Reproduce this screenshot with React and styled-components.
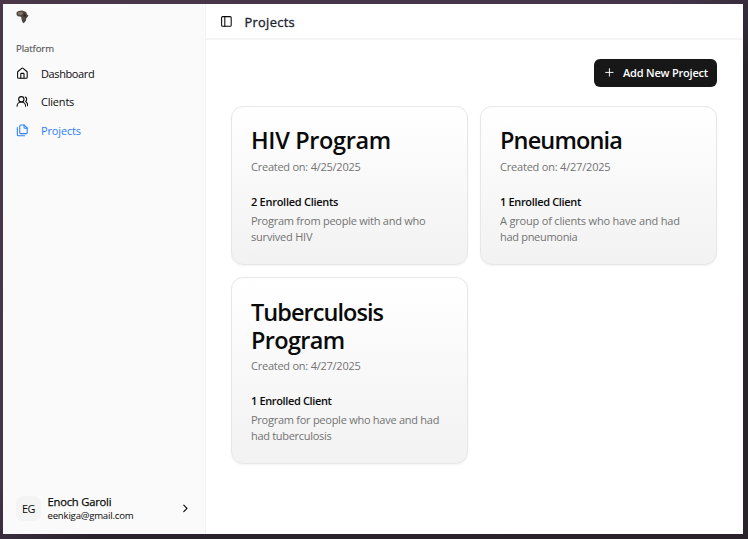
import React from 'react';
import styled, { createGlobalStyle } from 'styled-components';
import { House, UsersRound, PanelLeft, Plus, ChevronRight } from 'lucide-react';

const GlobalStyle = createGlobalStyle`
  * { box-sizing: border-box; }
  body { margin: 0; font-family: 'Open Sans', 'Noto Sans', sans-serif; color: #0a0a0a; }
  h1, h2, p { margin: 0; font-weight: inherit; }
`;

const Desktop = styled.div`
  height: 539px;
  padding: 4px 5px 5px 3px;
  background: linear-gradient(to bottom right, #493748 0%, #44354a 45%, #28232b 56%, #2a222a 100%);
`;

const Window = styled.div`
  display: grid;
  grid-template-columns: 203px 1fr;
  height: 530px;
  background: #fff;
`;

const Sidebar = styled.aside`
  display: flex;
  flex-direction: column;
  background: #fafafa;
  border-right: 1px solid #f1f1f1;
`;

const Logo = styled.svg`
  display: block;
  width: 13px;
  height: 14px;
  margin: 6px 0 0 13px;
`;

const Text = styled.span`
  display: block;
  white-space: nowrap;
  letter-spacing: ${(p) => p.$track || 0}px;
`;

const GroupLabel = styled(Text)`
  margin: 18px 0 0 13px;
  font-size: 9.6px;
  line-height: 14px;
  -webkit-text-stroke: 0.15px currentColor;
  color: #555;
`;

const Nav = styled.nav`
  display: flex;
  flex-direction: column;
  margin-top: 3px;
`;

const NavItem = styled.a`
  display: flex;
  align-items: center;
  gap: 12.6px;
  height: 28.6px;
  padding-left: 12.6px;
  font-size: 11px;
  color: ${(p) => (p.$active ? '#2b7fff' : '#0a0a0a')};
  svg { display: block; }
`;

const Account = styled.div`
  display: flex;
  align-items: center;
  height: 38px;
  margin: auto 13px 7px 13px;
`;

const Avatar = styled.div`
  display: grid;
  place-items: center;
  width: 25px;
  height: 25px;
  margin-right: 6.5px;
  border-radius: 7px;
  background: #f4f4f4;
  font-size: 10.8px;
`;

const AccountText = styled.div`
  flex: 1;
`;

const AccountName = styled(Text)`
  font-size: 11.2px;
  line-height: 14px;
  -webkit-text-stroke: 0.25px currentColor;
`;

const AccountMail = styled(Text)`
  font-size: 9.6px;
  line-height: 13px;
`;

const Main = styled.main`
  display: flex;
  flex-direction: column;
  min-width: 0;
`;

const Header = styled.header`
  display: flex;
  align-items: center;
  gap: 12px;
  height: 36px;
  padding-left: 13.6px;
  border-bottom: 2px solid #f4f4f4;
`;

const HeaderTitle = styled(Text)`
  margin-top: 1px;
  font-size: 12.8px;
  line-height: 20px;
  -webkit-text-stroke: 0.35px currentColor;
  color: #1d2530;
`;

const Content = styled.section`
  padding: 19px 26px 0 25px;
`;

const Actions = styled.div`
  display: flex;
  justify-content: flex-end;
`;

const AddButton = styled.button`
  display: flex;
  align-items: center;
  justify-content: space-between;
  width: 123px;
  height: 28px;
  padding: 0 9px 1px 9px;
  border: 0;
  border-radius: 6px;
  background: #171717;
  color: #fff;
  font: 600 11px 'Open Sans', 'Noto Sans', sans-serif;
`;

const Grid = styled.div`
  display: grid;
  grid-template-columns: 237px 237px;
  gap: 12.6px 12px;
  margin-top: 18.6px;
`;

const Card = styled.article`
  padding: 19.8px 19px 18.7px;
  border: 1px solid #e7e7e7;
  border-radius: 12px;
  background: linear-gradient(to top, #f2f2f2, #fff);
  box-shadow: 0 1px 2px rgba(0, 0, 0, 0.05);
`;

const CardTitle = styled.h2`
  font-size: 23.5px;
  line-height: 28px;
  font-weight: 600;
`;

const Created = styled(Text)`
  margin-top: 4.5px;
  font-size: 11px;
  line-height: 16px;
  color: #737373;
`;

const Enrolled = styled(Text)`
  margin-top: 19px;
  font-size: 11px;
  line-height: 16px;
  font-weight: 600;
`;

const Description = styled.div`
  margin-top: 3px;
  font-size: 11px;
  line-height: 16px;
  color: #737373;
`;

function PagesIcon({ size = 12 }) {
  return (
    <svg width={size} height={size} viewBox="0 0 24 24" fill="none" stroke="currentColor" strokeWidth="2" strokeLinecap="round" strokeLinejoin="round">
      <path d="M15.5 2H9a2 2 0 0 0-2 2v12a2 2 0 0 0 2 2h10a2 2 0 0 0 2-2V7.5Z" />
      <path d="M15 2v4a2 2 0 0 0 2 2h4" />
      <path d="M2.5 6.5v13a2.5 2.5 0 0 0 2.5 2.5h11" />
    </svg>
  );
}

const navigation = [
  { label: 'Dashboard', icon: House, track: -0.39 },
  { label: 'Clients', icon: UsersRound, track: -0.2 },
  { label: 'Projects', icon: PagesIcon, track: -0.15, active: true },
];

const projects = [
  {
    title: [['HIV Program', -0.35]],
    created: ['Created on: 4/25/2025', -0.24],
    enrolled: ['2 Enrolled Clients', -0.27],
    description: [['Program from people with and who', -0.25], ['survived HIV', -0.2]],
  },
  {
    title: [['Pneumonia', -0.85]],
    created: ['Created on: 4/27/2025', -0.2],
    enrolled: ['1 Enrolled Client', -0.34],
    description: [['A group of clients who have and had', -0.19], ['had pneumonia', -0.3]],
  },
  {
    title: [['Tuberculosis', -0.95], ['Program', -0.65]],
    created: ['Created on: 4/27/2025', -0.24],
    enrolled: ['1 Enrolled Client', -0.36],
    description: [['Program for people who have and had', -0.26], ['had tuberculosis', -0.3]],
  },
];

function AfricaLogo() {
  return (
    <Logo viewBox="0 0 13 14">
      <path d="M.6 2.2 2.6.9 6 .5 8.2 1.3 10.2 1.9 11 4.5 12.4 5.2 11.8 6.8 10.2 8.4 10 10.4 8.8 12.3 7.2 13.2 6.2 11.5 5.5 9.2 5.4 7.2 4 6.5 1.6 6.2.5 4.5Z" fill="#51463f" />
      <path d="M2 2.4 6 1.8 7 3.8 5 5 2 4.5Z" fill="#877768" />
      <path d="M8 3 10 5 9.5 7 7.2 6.2Z" fill="#302a28" />
    </Logo>
  );
}

function ProjectCard({ project }) {
  return (
    <Card>
      <CardTitle>
        {project.title.map(([line, track]) => <Text key={line} $track={track}>{line}</Text>)}
      </CardTitle>
      <Created $track={project.created[1]}>{project.created[0]}</Created>
      <Enrolled $track={project.enrolled[1]}>{project.enrolled[0]}</Enrolled>
      <Description>
        {project.description.map(([line, track]) => <Text key={line} $track={track}>{line}</Text>)}
      </Description>
    </Card>
  );
}

export default function App() {
  return (
    <Desktop>
      <GlobalStyle />
      <Window>
        <Sidebar>
          <AfricaLogo />
          <GroupLabel $track={-0.1}>Platform</GroupLabel>
          <Nav>
            {navigation.map(({ label, icon: Icon, track, active }) => (
              <NavItem key={label} $active={active}>
                <Icon size={12.8} strokeWidth={2} />
                <Text $track={track}>{label}</Text>
              </NavItem>
            ))}
          </Nav>
          <Account>
            <Avatar><Text $track={-0.3}>EG</Text></Avatar>
            <AccountText>
              <AccountName $track={-0.2}>Enoch Garoli</AccountName>
              <AccountMail $track={-0.2}>eenkiga@gmail.com</AccountMail>
            </AccountText>
            <ChevronRight size={12.8} strokeWidth={2.2} />
          </Account>
        </Sidebar>
        <Main>
          <Header>
            <PanelLeft size={12.8} strokeWidth={2} />
            <HeaderTitle $track={0.35}>Projects</HeaderTitle>
          </Header>
          <Content>
            <Actions>
              <AddButton>
                <Plus size={12.8} strokeWidth={1.8} />
                <Text $track={-0.2}>Add New Project</Text>
              </AddButton>
            </Actions>
            <Grid>
              {projects.map((project) => <ProjectCard key={project.title[0][0]} project={project} />)}
            </Grid>
          </Content>
        </Main>
      </Window>
    </Desktop>
  );
}
